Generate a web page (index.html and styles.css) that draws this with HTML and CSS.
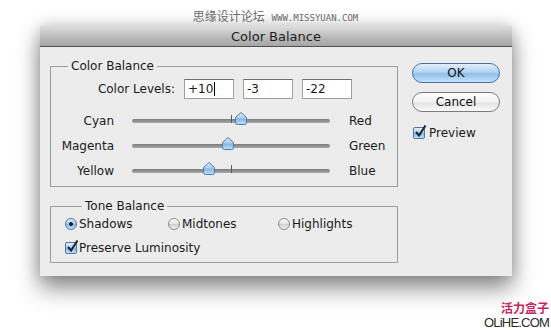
FILE: index.html
```html
<!DOCTYPE html>
<html lang="en">
<head>
    <meta charset="UTF-8">
    <meta name="viewport" content="width=device-width, initial-scale=1.0">
    <title>Color Balance</title>
    <link rel="stylesheet" href="styles.css">
</head>
<body>
    <svg class="defs" width="0" height="0">
        <defs>
            <linearGradient id="aqua" x1="0" y1="0" x2="0" y2="1">
                <stop offset="0" stop-color="#e4f0fb"/>
                <stop offset="0.45" stop-color="#a9cdef"/>
                <stop offset="0.55" stop-color="#86b7e6"/>
                <stop offset="1" stop-color="#c3e1fb"/>
            </linearGradient>
        </defs>
    </svg>

    <div class="watermark-top">
        <span class="cn">思缘设计论坛</span>
        <span class="url">WWW.MISSYUAN.COM</span>
    </div>

    <div class="dialog">
        <div class="titlebar">Color Balance</div>
        <div class="dialog-body">
            <div class="main">
                <fieldset class="group balance">
                    <legend>Color Balance</legend>
                    <div class="levels">
                        <label>Color Levels:</label>
                        <div class="field">+10<span class="caret"></span></div>
                        <div class="field">-3</div>
                        <div class="field">-22</div>
                    </div>

                    <div class="slider-row">
                        <span class="from">Cyan</span>
                        <div class="track">
                            <span class="tick"></span>
                            <svg class="thumb" style="left: 55%" viewBox="0 0 12 13" width="12" height="13">
                                <path d="M6 0.5 L11.5 5.5 L11.5 10.5 Q11.5 12.5 9.5 12.5 L2.5 12.5 Q0.5 12.5 0.5 10.5 L0.5 5.5 Z" fill="url(#aqua)" stroke="#4f78a8"/>
                            </svg>
                        </div>
                        <span class="to">Red</span>
                    </div>
                    <div class="slider-row">
                        <span class="from">Magenta</span>
                        <div class="track">
                            <span class="tick"></span>
                            <svg class="thumb" style="left: 48.5%" viewBox="0 0 12 13" width="12" height="13">
                                <path d="M6 0.5 L11.5 5.5 L11.5 10.5 Q11.5 12.5 9.5 12.5 L2.5 12.5 Q0.5 12.5 0.5 10.5 L0.5 5.5 Z" fill="url(#aqua)" stroke="#4f78a8"/>
                            </svg>
                        </div>
                        <span class="to">Green</span>
                    </div>
                    <div class="slider-row">
                        <span class="from">Yellow</span>
                        <div class="track">
                            <span class="tick"></span>
                            <svg class="thumb" style="left: 39%" viewBox="0 0 12 13" width="12" height="13">
                                <path d="M6 0.5 L11.5 5.5 L11.5 10.5 Q11.5 12.5 9.5 12.5 L2.5 12.5 Q0.5 12.5 0.5 10.5 L0.5 5.5 Z" fill="url(#aqua)" stroke="#4f78a8"/>
                            </svg>
                        </div>
                        <span class="to">Blue</span>
                    </div>
                </fieldset>

                <fieldset class="group tone">
                    <legend>Tone Balance</legend>
                    <div class="radios">
                        <div class="option"><span class="radio on"></span>Shadows</div>
                        <div class="option"><span class="radio"></span>Midtones</div>
                        <div class="option"><span class="radio"></span>Highlights</div>
                    </div>
                    <div class="check-row">
                        <span class="check">
                            <svg viewBox="0 0 14 14" width="14" height="14">
                                <path d="M3 7 L6 10.5 L12.5 0.5" fill="none" stroke="#1c2633" stroke-width="2"/>
                            </svg>
                        </span>
                        Preserve Luminosity
                    </div>
                </fieldset>
            </div>

            <div class="side">
                <button class="btn ok">OK</button>
                <button class="btn cancel">Cancel</button>
                <div class="check-row preview">
                    <span class="check">
                        <svg viewBox="0 0 14 14" width="14" height="14">
                            <path d="M3 7 L6 10.5 L12.5 0.5" fill="none" stroke="#1c2633" stroke-width="2"/>
                        </svg>
                    </span>
                    Preview
                </div>
            </div>
        </div>
    </div>

    <div class="watermark-bottom">
        <div class="cn">活力盒子</div>
        <div class="site">OLiHE.COM</div>
    </div>
</body>
</html>
```

FILE: styles.css
```css
body {
    margin: 0;
    background: #ffffff;
    font-family: "DejaVu Sans", sans-serif;
    font-size: 12px;
    color: #1a1a1a;
    width: 551px;
    height: 330px;
    overflow: hidden;
}
.defs {
    position: absolute;
    width: 0;
    height: 0;
}
.watermark-top {
    height: 17px;
    padding-top: 9px;
    line-height: 14px;
    text-align: center;
    color: #6a6a6a;
}
.watermark-top .cn {
    font-family: "Noto Sans CJK SC", sans-serif;
    font-size: 12px;
}
.watermark-top .url {
    font-family: "DejaVu Sans Mono", monospace;
    font-size: 9px;
    margin-left: 3px;
}
.dialog {
    margin-left: 40px;
    width: 472px;
    background: #ececec;
    box-shadow: 0 12px 22px rgba(0,0,0,0.45), 0 0 14px rgba(0,0,0,0.18);
}
.titlebar {
    height: 20px;
    line-height: 21px;
    text-align: center;
    font-size: 13px;
    color: #1e1e1e;
    background: linear-gradient(#dedede, #b9b9b9 60%, #a6a6a6);
    border-bottom: 1px solid #505050;
}
.dialog-body {
    display: flex;
    padding: 0 12px 13px 10px;
}
.main {
    width: 348px;
}
.group {
    margin: 12px 0 0 0;
    padding: 0;
    border: 1px solid #9d9d9d;
    min-width: 0;
}
.group legend {
    margin-left: 17px;
    padding: 0 3px;
    line-height: 14px;
}
.balance {
    padding: 6px 0 3px 0;
}
.levels {
    display: flex;
    align-items: center;
    height: 20px;
    margin-bottom: 9px;
}
.levels label {
    width: 124px;
    margin-right: 9px;
    text-align: right;
}
.field {
    box-sizing: border-box;
    width: 50px;
    height: 20px;
    margin-right: 9px;
    padding-left: 3px;
    line-height: 18px;
    background: #ffffff;
    border: 1px solid #a0a0a0;
    border-top-color: #6f6f6f;
}
.caret {
    display: inline-block;
    width: 1px;
    height: 14px;
    margin-left: 1px;
    vertical-align: -3px;
    background: #000000;
}
.slider-row {
    display: flex;
    align-items: center;
    height: 25px;
}
.slider-row .from {
    width: 63px;
    text-align: right;
}
.track {
    position: relative;
    width: 198px;
    height: 4px;
    margin-left: 18px;
    border-radius: 2px;
    background: linear-gradient(#7c7c7c, #a8a8a8);
}
.tick {
    position: absolute;
    left: 99px;
    top: -4px;
    width: 1px;
    height: 8px;
    background: #5c5c5c;
}
.thumb {
    position: absolute;
    top: -7px;
    transform: translateX(-50%);
}
.slider-row .to {
    margin-left: 19px;
}
.tone {
    padding: 4px 0 7px 14px;
}
.radios {
    display: grid;
    grid-template-columns: 103px 110px auto;
    height: 14px;
    align-items: center;
}
.option {
    display: flex;
    align-items: center;
}
.radio {
    box-sizing: border-box;
    width: 12px;
    height: 12px;
    margin-right: 2px;
    border-radius: 50%;
    border: 1px solid #8a8a8a;
    background: linear-gradient(#ffffff, #e2e2e2 50%, #cfcfcf 55%, #f4f4f4);
}
.radio.on {
    border-color: #4f78a8;
    background: radial-gradient(circle, #1c2633 0 1.7px, transparent 2.2px),
        linear-gradient(#e4f0fb, #a9cdef 45%, #86b7e6 55%, #c3e1fb);
}
.check-row {
    display: flex;
    align-items: center;
    height: 14px;
    margin-top: 10px;
}
.check {
    position: relative;
    box-sizing: border-box;
    width: 12px;
    height: 12px;
    margin-right: 2px;
    border: 1px solid #4f78a8;
    border-radius: 2px;
    background: linear-gradient(#e4f0fb, #a9cdef 45%, #86b7e6 55%, #c3e1fb);
}
.check svg {
    position: absolute;
    left: -1px;
    top: -3px;
}
.side {
    width: 88px;
    margin-left: 14px;
}
.btn {
    display: block;
    box-sizing: border-box;
    width: 88px;
    height: 20px;
    padding: 0;
    border-radius: 10px;
    font-family: "DejaVu Sans", sans-serif;
    font-size: 12px;
    color: #111111;
    line-height: 18px;
}
.ok {
    margin-top: 16px;
    border: 1px solid #4a6f9e;
    background: linear-gradient(#e2effb, #b2d4f3 45%, #8ebfeb 55%, #c6e3fb);
}
.cancel {
    margin-top: 9px;
    border: 1px solid #7b7b7b;
    background: linear-gradient(#ffffff, #f3f3f3 50%, #e3e3e3 55%, #fbfbfb);
}
.preview {
    margin-top: 14px;
    padding-left: 1px;
}
.preview .check {
    margin-right: 4px;
}
.watermark-bottom {
    margin-top: 25px;
    padding-right: 2px;
    text-align: right;
}
.watermark-bottom .cn {
    height: 13px;
    line-height: 13px;
    font-family: "Noto Sans CJK SC", sans-serif;
    font-weight: bold;
    font-size: 12px;
    color: #cc1f5f;
}
.watermark-bottom .site {
    height: 13px;
    margin-top: 2px;
    line-height: 13px;
    font-family: "Liberation Sans", sans-serif;
    font-size: 13px;
    letter-spacing: -0.8px;
    color: #2a2a2a;
}
```
